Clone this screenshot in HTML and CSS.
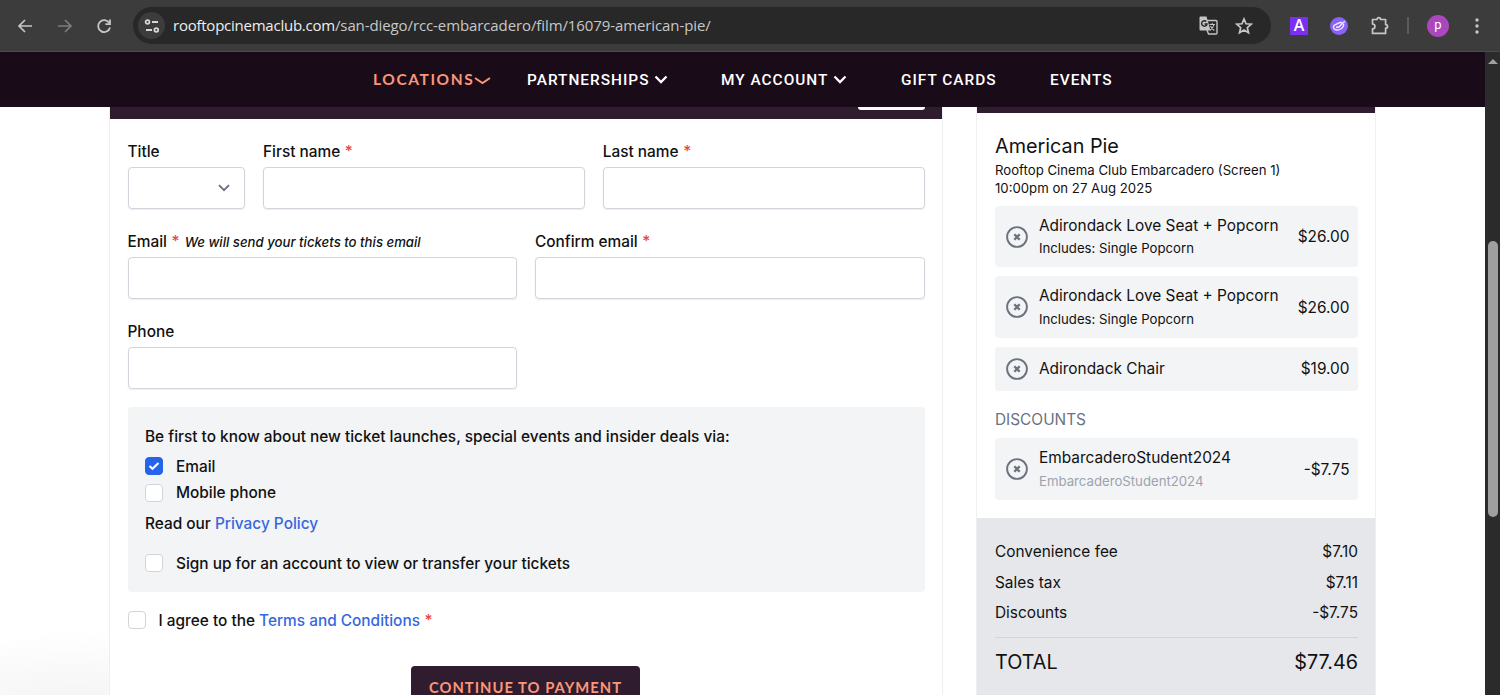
FILE: index.html
```
<!DOCTYPE html>
<html lang="en">
<head>
    <meta charset="UTF-8">
    <meta name="viewport" content="width=device-width, initial-scale=1.0">
    <title>American Pie - Rooftop Cinema Club</title>
    <link rel="stylesheet" href="styles.css">
</head>
<body>
    <!-- Icons used more than once -->
    <svg class="sprite">
        <symbol id="remove" viewBox="0 0 22 22">
            <circle cx="11" cy="11" r="9.9" fill="none" stroke="#6b7280" stroke-width="1.9"/>
            <path d="M8.3 8.3l5.4 5.4M13.7 8.3l-5.4 5.4" stroke="#6b7280" stroke-width="2.3"/>
        </symbol>
        <symbol id="chevron" viewBox="0 0 14 9">
            <path d="M1.5 1.5L7 7l5.5-5.5" fill="none" stroke="currentColor" stroke-width="2.3"/>
        </symbol>
    </svg>

    <div class="browser-bar">
        <div class="browser-nav">
            <svg width="16" height="16" viewBox="0 0 16 16"><path d="M15 8H2M8 2L2 8l6 6" fill="none" stroke="#c7c7c7" stroke-width="1.7"/></svg>
            <svg width="16" height="16" viewBox="0 0 16 16"><path d="M1 8h13M8 2l6 6-6 6" fill="none" stroke="#7c7c7c" stroke-width="1.7"/></svg>
            <svg width="16" height="16" viewBox="0 0 16 16"><path d="M13.2 4.8A6 6 0 1 0 14 9.5M14 1.5v4.6H9.4" fill="none" stroke="#c7c7c7" stroke-width="1.8"/></svg>
        </div>
        <div class="address-bar">
            <span class="site-info">
                <svg width="16" height="14" viewBox="0 0 16 14" fill="none" stroke="#d6d6d6" stroke-width="1.8"><circle cx="3.5" cy="3" r="1.9"/><path d="M8 3h6M2 11h6"/><circle cx="12.3" cy="11" r="1.9"/></svg>
            </span>
            <span class="url"><b>rooftopcinemaclub.com</b>/san-diego/rcc-embarcadero/film/16079-american-pie/</span>
            <svg class="translate" width="19" height="19" viewBox="0 0 19 19">
                <path d="M8 4.5h9a1 1 0 0 1 1 1V17a1 1 0 0 1-1 1H9.5L8 14" fill="none" stroke="#c4c4c4" stroke-width="1.4"/>
                <path d="M1.5.5h6l4 14h-10a1 1 0 0 1-1-1v-12a1 1 0 0 1 1-1z" fill="#c4c4c4"/>
                <path d="M7.3 5.6A2.7 2.7 0 1 0 8 8H5.5" fill="none" stroke="#282828" stroke-width="1.4"/>
                <path d="M10.5 8.5H16M13.2 7v1.5M15 8.5c-.5 2.5-2 4.5-4 5.8M11.5 10c.8 1.8 2 3.3 3.8 4.5" fill="none" stroke="#c4c4c4" stroke-width="1.1"/>
            </svg>
            <svg class="star" width="18" height="18" viewBox="0 0 18 18"><path d="M9 2l2 4.8 5.2.4-3.9 3.5 1.2 5.1L9 13.1l-4.5 2.7 1.2-5.1-3.9-3.5 5.2-.4z" fill="none" stroke="#c7c7c7" stroke-width="1.7"/></svg>
        </div>
        <div class="extensions">
            <span class="ext-a">A</span>
            <svg class="ext-pen" width="18" height="18" viewBox="0 0 18 18"><circle cx="9" cy="9" r="9" fill="#8a63f5"/><path d="M14.8 4.2l-6.3 6M12 5.5C9 5 7.5 7 5.5 7.6c-2 .6-2.5 2.6-1.5 4 1.3 1.8 4.5 1.7 6.7.4 2-1.2 3.3-2.8 2.8-5M6 10.3h2.500l2-1.5" fill="none" stroke="#f1eaff" stroke-width="1.4"/></svg>
            <svg class="ext-puzzle" width="20" height="20" viewBox="0 0 20 20"><path d="M2.5 3.5H7c0-2.6 3.6-2.6 3.6 0h5v5.1c2.6 0 2.6 3.6 0 3.6v5.2H2.5v-4.5c3.2 0 3.2-4.9 0-4.9z" fill="none" stroke="#c7c7c7" stroke-width="1.7" stroke-linejoin="round"/></svg>
            <span class="divider"></span>
            <span class="avatar">p</span>
            <svg class="dots" width="4" height="18" viewBox="0 0 4 18" fill="#c7c7c7"><circle cx="2" cy="3" r="1.7"/><circle cx="2" cy="9" r="1.7"/><circle cx="2" cy="15" r="1.7"/></svg>
        </div>
    </div>

    <div class="viewport">
        <div class="page">
            <nav class="site-nav">
                <a class="locations">LOCATIONS<svg width="17" height="9" viewBox="0 0 17 9"><path d="M1 2l7.5 5L16 2" fill="none" stroke="currentColor" stroke-width="2"/></svg></a>
                <a class="partnerships">PARTNERSHIPS<svg width="14" height="9"><use href="#chevron"/></svg></a>
                <a class="account">MY ACCOUNT<svg width="14" height="9"><use href="#chevron"/></svg></a>
                <a class="gifts">GIFT CARDS</a>
                <a class="events">EVENTS</a>
            </nav>

            <main class="checkout">
                <section class="details">
                    <div class="details-header"><span class="header-button"></span></div>
                    <form class="form">
                        <div class="row">
                            <div class="field title-field">
                                <label>Title</label>
                                <div class="input select"><svg width="12" height="8" viewBox="0 0 12 8"><path d="M1 1.2l5 5 5-5" fill="none" stroke="#6b7280" stroke-width="1.9"/></svg></div>
                            </div>
                            <div class="field">
                                <label>First name <i class="required">*</i></label>
                                <div class="input"></div>
                            </div>
                            <div class="field">
                                <label>Last name <i class="required">*</i></label>
                                <div class="input"></div>
                            </div>
                        </div>
                        <div class="row">
                            <div class="field">
                                <label>Email <i class="required">*</i> <em>We will send your tickets to this email</em></label>
                                <div class="input"></div>
                            </div>
                            <div class="field">
                                <label>Confirm email <i class="required">*</i></label>
                                <div class="input"></div>
                            </div>
                        </div>
                        <div class="row">
                            <div class="field">
                                <label>Phone</label>
                                <div class="input"></div>
                            </div>
                            <div class="field"></div>
                        </div>

                        <div class="marketing">
                            <p class="intro">Be first to know about new ticket launches, special events and insider deals via:</p>
                            <label class="option"><span class="checkbox checked"><svg width="12" height="10" viewBox="0 0 12 10"><path d="M1.5 5l3 2.7 6-5.7" fill="none" stroke="#fff" stroke-width="2.1"/></svg></span>Email</label>
                            <label class="option"><span class="checkbox"></span>Mobile phone</label>
                            <p class="privacy">Read our <a>Privacy Policy</a></p>
                            <label class="option signup"><span class="checkbox"></span>Sign up for an account to view or transfer your tickets</label>
                        </div>

                        <label class="option terms"><span class="checkbox"></span><span>I agree to the <a>Terms and Conditions</a> <i class="required">*</i></span></label>
                        <div class="submit">CONTINUE TO PAYMENT</div>
                    </form>
                </section>

                <aside class="summary">
                    <div class="summary-header"></div>
                    <div class="order">
                        <h2>American Pie</h2>
                        <p class="venue">Rooftop Cinema Club Embarcadero (Screen 1)<br>10:00pm on 27 Aug 2025</p>
                        <div class="items">
                            <div class="item tall">
                                <svg width="22" height="22"><use href="#remove"/></svg>
                                <div class="item-text">Adirondack Love Seat + Popcorn<small>Includes: Single Popcorn</small></div>
                                <span>$26.00</span>
                            </div>
                            <div class="item tall">
                                <svg width="22" height="22"><use href="#remove"/></svg>
                                <div class="item-text">Adirondack Love Seat + Popcorn<small>Includes: Single Popcorn</small></div>
                                <span>$26.00</span>
                            </div>
                            <div class="item">
                                <svg width="22" height="22"><use href="#remove"/></svg>
                                <div class="item-text">Adirondack Chair</div>
                                <span>$19.00</span>
                            </div>
                        </div>
                        <h3>DISCOUNTS</h3>
                        <div class="item tall">
                            <svg width="22" height="22"><use href="#remove"/></svg>
                            <div class="item-text">EmbarcaderoStudent2024<small class="muted">EmbarcaderoStudent2024</small></div>
                            <span>-$7.75</span>
                        </div>
                    </div>
                    <div class="totals">
                        <div class="line"><span>Convenience fee</span><span>$7.10</span></div>
                        <div class="line"><span>Sales tax</span><span>$7.11</span></div>
                        <div class="line"><span>Discounts</span><span>-$7.75</span></div>
                        <div class="line total"><span>TOTAL</span><span>$77.46</span></div>
                    </div>
                </aside>
            </main>
        </div>
        <div class="scrollbar">
            <span class="arrow"></span>
            <span class="thumb"></span>
        </div>
    </div>
</body>
</html>
```
FILE: styles.css
```
* {
    box-sizing: border-box;
}

body {
    margin: 0;
    height: 695px;
    overflow: hidden;
    display: flex;
    flex-direction: column;
    font-family: Inter, sans-serif;
    font-size: 15.4px;
    color: #111;
    background-color: #3c3c3c;
}

svg {
    display: block;
    flex: none;
}

.sprite {
    display: none;
}

p, h2, h3 {
    margin: 0;
    font-weight: inherit;
}

/* Browser toolbar */
.browser-bar {
    height: 52px;
    flex: none;
    display: flex;
    align-items: center;
    background-color: #3c3c3c;
    border-bottom: 1px solid #4a4c4b;
}

.browser-nav {
    width: 133px;
    padding-left: 17px;
    display: flex;
    gap: 23.5px;
}

.address-bar {
    width: 1138px;
    height: 37px;
    padding: 0 18px 0 5px;
    border-radius: 19px;
    background-color: #282828;
    display: flex;
    align-items: center;
}

.site-info {
    width: 27px;
    height: 27px;
    border-radius: 50%;
    background-color: #3c3c3c;
    display: flex;
    align-items: center;
    justify-content: center;
}

.url {
    flex: 1;
    margin-left: 8px;
    padding-bottom: 2px;
    font: 15px "Open Sans", sans-serif;
    letter-spacing: -0.1px;
    color: #c7c7c7;
}

.url b {
    font-weight: 400;
    letter-spacing: -0.24px;
    color: #eee;
}

.star {
    margin-left: 17px;
}

.extensions {
    flex: 1;
    display: flex;
    align-items: center;
    padding-left: 19px;
}

.ext-a {
    width: 18px;
    height: 18px;
    background-color: #7b2ff2;
    color: #fff;
    font: 600 16px/17px "Open Sans", sans-serif;
    text-align: center;
}

.ext-pen {
    margin-left: 22px;
}

.ext-puzzle {
    margin-left: 22px;
}

.divider {
    width: 2px;
    height: 17px;
    margin-left: 17px;
    background-color: #5c5c5c;
}

.avatar {
    width: 22px;
    height: 22px;
    margin-left: 18px;
    border-radius: 50%;
    background-color: #ab47bc;
    color: #fff;
    font: 13px/20px Roboto, sans-serif;
    text-align: center;
}

.dots {
    margin-left: 26px;
}

.viewport {
    flex: 1;
    min-height: 0;
    display: flex;
}

.page {
    flex: 1;
    background: radial-gradient(ellipse 210px 70px at 70px 650px, #f4f4f4, #fff);
}

/* Site navigation */
.site-nav {
    height: 55px;
    padding-left: 373px;
    display: flex;
    align-items: center;
    background-color: #1a0b19;
    color: #fff;
    font: 500 15.4px Roboto, sans-serif;
    letter-spacing: 1px;
}

.site-nav a {
    display: flex;
    align-items: center;
}

.site-nav a svg {
    margin-left: 5px;
}

.site-nav .locations {
    width: 154px;
    padding-bottom: 1px;
    color: #fb9678;
    font: bold 15.5px Lato, sans-serif;
    letter-spacing: 1.6px;
}

.site-nav .locations svg {
    margin: 3px 0 0;
}

.partnerships {
    width: 194px;
}

.account {
    width: 180px;
}

.gifts {
    width: 149px;
}

/* Checkout */
.checkout {
    height: 588px;
    padding-left: 109px;
    display: flex;
    gap: 33px;
    overflow: hidden;
}

.details {
    width: 834px;
    border: solid #eeeff0;
    border-width: 0 1px;
    background-color: #fff;
}

.details-header {
    height: 12px;
    padding-right: 17px;
    display: flex;
    justify-content: flex-end;
    background-color: #2f1c2e;
}

.header-button {
    width: 67px;
    height: 3px;
    border-radius: 0 0 4px 4px;
    background-color: #fff;
}

.form {
    padding: 20px 17.5px 0;
    font-weight: 500;
}

.row {
    display: flex;
    gap: 18px;
    height: 90px;
}

.field {
    flex: 1;
}

.title-field {
    flex: none;
    width: 117.5px;
}

.field label {
    display: block;
    height: 28.4px;
    line-height: 25px;
}

.field em {
    margin-left: 1px;
    font-size: 13.2px;
}

.required {
    margin-left: 0.5px;
    font-style: normal;
    color: #ef4444;
}

.input {
    height: 42px;
    border: 1px solid #d1d5db;
    border-radius: 4px;
    background-color: #fff;
    box-shadow: 0 1px 2px rgba(0,0,0,0.07);
}

.select {
    display: flex;
    align-items: center;
    justify-content: flex-end;
    padding-right: 14px;
}

.marketing {
    height: 185px;
    margin-top: -2px;
    padding: 17px 17.5px 0;
    border-radius: 4px;
    background-color: #f3f4f6;
}

.intro {
    height: 29px;
    line-height: 25px;
}

.option {
    display: flex;
    align-items: center;
    height: 26.5px;
}

.checkbox {
    width: 18px;
    height: 18px;
    margin-right: 13px;
    border: 1px solid #d1d5db;
    border-radius: 4px;
    background-color: #fff;
    display: flex;
    align-items: center;
    justify-content: center;
}

.checked {
    border-color: #2563eb;
    background-color: #2563eb;
}

.privacy {
    margin-top: 6px;
    line-height: 24px;
}

.form a {
    color: #3667e0;
}

.signup {
    margin-top: 14px;
}

.terms {
    margin-top: 15px;
}

.submit {
    width: 229px;
    height: 42px;
    margin: 32.5px 0 0 283.5px;
    border-radius: 4px;
    background-color: #2f1c2e;
    color: #fb9678;
    font: bold 14.8px/43px Lato, sans-serif;
    letter-spacing: 1px;
    text-align: center;
}

/* Order summary */
.summary {
    width: 400px;
    border: solid #eeeff0;
    border-width: 0 1px;
    background-color: #fff;
}

.summary-header {
    height: 6px;
    background-color: #2f1c2e;
}

.order {
    height: 405px;
    padding: 20px 17px 0 18px;
}

.order h2 {
    font-size: 19.8px;
    line-height: 27px;
}

.venue {
    margin-top: 2px;
    font-size: 13.2px;
    line-height: 17.5px;
}

.items {
    margin-top: 9px;
    display: flex;
    flex-direction: column;
    gap: 9px;
}

.item {
    height: 44px;
    padding: 0 8.5px 0 11px;
    border-radius: 4px;
    background-color: #f3f4f6;
    display: flex;
    align-items: center;
}

.item.tall {
    height: 61.4px;
}

.item-text {
    flex: 1;
    margin-left: 11px;
    line-height: 24.5px;
}

.item-text small {
    display: block;
    font-size: 13.2px;
    line-height: 21px;
}

.item-text .muted {
    color: #9ca3af;
}

.order h3 {
    height: 47.7px;
    padding-top: 17px;
    font-size: 15.4px;
    line-height: 24px;
    color: #6b7280;
}

.totals {
    height: 200px;
    padding: 18px 17px 0 18px;
    background-color: #e5e7eb;
}

.line {
    height: 30.8px;
    display: flex;
    align-items: center;
    justify-content: space-between;
}

.total {
    height: 49px;
    margin-top: 8.5px;
    border-top: 1px solid #d1d5db;
    font-size: 19.8px;
}

/* Scrollbar */
.scrollbar {
    width: 15px;
    padding-top: 7px;
    display: flex;
    flex-direction: column;
    align-items: center;
    background-color: #2b2b2b;
}

.arrow {
    border: 5px solid transparent;
    border-top: 0;
    border-bottom: 5px solid #a0a0a0;
}

.thumb {
    width: 10px;
    height: 276px;
    margin-top: 177px;
    border-radius: 5px;
    background-color: #9f9f9f;
}
```
